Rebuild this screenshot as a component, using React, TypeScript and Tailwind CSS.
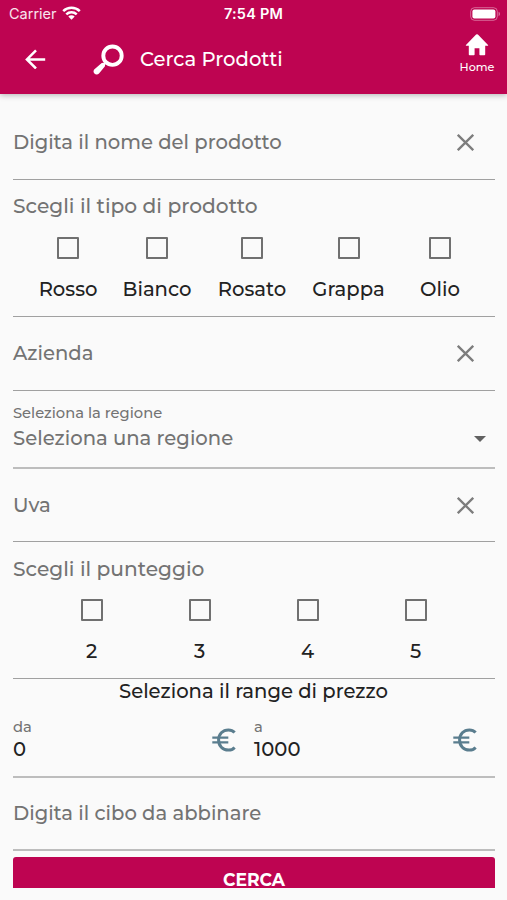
import type { ReactNode } from 'react'

const tipi = [
  { label: 'Rosso', width: 'w-[58px]' },
  { label: 'Bianco', width: 'w-[67px]' },
  { label: 'Rosato', width: 'w-[70px]' },
  { label: 'Grappa', width: 'w-[70px]' },
  { label: 'Olio', width: 'w-[60px]' },
]

const punteggi = ['2', '3', '4', '5']

function StatusBar() {
  return (
    <div className="grid h-7 grid-cols-3 items-center pl-[9px] pr-[6px] font-['Inter',sans-serif] text-[14.5px] leading-7">
      <div className="flex items-center gap-[5px]">
        <span className="text-white/90">Carrier</span>
        <svg className="-mt-[2px]" width="19" height="14" viewBox="0 0 19 14" fill="none" stroke="currentColor" strokeWidth="2.5">
          <path d="M1.2 5.2a11.8 11.8 0 0 1 16.6 0" />
          <path d="M4.3 8.4a7.4 7.4 0 0 1 10.4 0" />
          <path d="M9.5 13.8 6.3 10.6a4.6 4.6 0 0 1 6.4 0z" fill="currentColor" stroke="none" />
        </svg>
      </div>
      <span className="-ml-[3px] text-center font-semibold tracking-[0.2px]">7:54 PM</span>
      <svg className="-mt-px justify-self-end" width="31" height="14" viewBox="0 0 31 14">
        <rect x="0.7" y="0.7" width="26.6" height="12.6" rx="3.8" fill="none" stroke="#fff" strokeOpacity="0.4" />
        <rect x="2.4" y="2.4" width="23" height="9.2" rx="2" fill="#fff" />
        <path d="M28.6 4.8v4.4q1.4-.6 1.4-2.2t-1.4-2.2z" fill="#fff" fillOpacity="0.45" />
      </svg>
    </div>
  )
}

function Header() {
  return (
    <header className="h-[94px] shrink-0 bg-[#be0451] text-white shadow-[0_1px_6px_rgba(0,0,0,0.3)]">
      <StatusBar />
      <div className="flex h-[62px] items-center pl-[25px] pr-[10px]">
        <svg width="21" height="20" viewBox="0 0 21 20" fill="none" stroke="currentColor" strokeWidth="2.5">
          <path d="M20.2 10.4H2.2M11 1.3 1.900 10.400l9.100 9.100" />
        </svg>
        <svg className="ml-[47px]" width="31" height="31" viewBox="0 0 31 31" fill="none" stroke="currentColor">
          <circle cx="19.5" cy="11.7" r="9.2" strokeWidth="3.9" />
          <path d="m13 18.2-3 3" strokeWidth="2.6" />
          <path d="M8.4 19.2 1.2 25.6a3 3 0 0 0 .2 3.8 3.1 3.1 0 0 0 4.6.2l5.8-7.2q.6-1-.2-1.8l-1.4-1.4q-1-.8-1.8 0z" fill="currentColor" stroke="none" />
        </svg>
        <h1 className="ml-[16px] pt-[2px] text-[19.6px] font-medium">Cerca Prodotti</h1>
        <div className="ml-auto flex w-[40px] flex-col items-center pb-[11px]">
          <svg width="24" height="22" viewBox="0 0 24 22" fill="currentColor">
            <path d="M9.6 20.4v-6.2h4.8v6.2q0 .8.8.8h4.2q.8 0 .8-.8v-8.6h2.4q1-.1.2-1L12.9.6q-.9-.8-1.8 0L1.2 10.8q-.8.9.2 1h2.4v8.6q0 .8.8.8h4.2q.8 0 .8-.8z" />
          </svg>
          <span className="mt-[4px] text-[11.2px] font-medium leading-[14px]">Home</span>
        </div>
      </div>
    </header>
  )
}

function ClearIcon() {
  return (
    <svg className="mr-[21px]" width="17" height="17" viewBox="0 0 17 17" stroke="#7d7d7d" strokeWidth="2.3">
      <path d="m.8.8 15.4 15.4M16.2.8.8 16.2" />
    </svg>
  )
}

function EuroIcon() {
  return (
    <svg width="24" height="24" viewBox="0 0 24 24" fill="none" stroke="#5a7d8e" strokeWidth="3">
      <path d="M22.6 4.6C21 2.8 18.8 1.9 16.4 1.9 10.6 1.9 6.6 6.2 6.6 12s4 10.1 9.8 10.1c2.6 0 4.6-.9 6.2-2.7" />
      <path d="M.3 9.6h16M.3 14.4h16" strokeWidth="2.4" />
    </svg>
  )
}

function Checkbox() {
  return <span className="block size-[22px] rounded-[1px] border-2 border-[#707070]" />
}

function Field({ className, children }: { className: string; children: ReactNode }) {
  return (
    <div className={`flex items-center justify-between text-[#737373] ${className}`}>
      {children}
    </div>
  )
}

function Prezzo({ label, value }: { label: string; value: string }) {
  return (
    <div className="flex flex-1 justify-between pr-[18px]">
      <div>
        <div className="text-[14.7px] leading-[20px] text-[#737373]">{label}</div>
        <div className="leading-6 text-[#222]">{value}</div>
      </div>
      <div className="pt-[11px]">
        <EuroIcon />
      </div>
    </div>
  )
}

export default function App() {
  return (
    <div className="flex h-[900px] w-[507px] flex-col overflow-hidden bg-[#fafafa] font-['Montserrat','Inter',sans-serif]">
      <Header />
      <main className="pl-[13px] pr-[12px] text-[19.6px] font-medium leading-6">
        <Field className="h-[86px] border-b border-[#a0a0a0] pt-[11px]">
          <span>Digita il nome del prodotto</span>
          <ClearIcon />
        </Field>

        <div className="h-[137px] border-b border-[#a0a0a0] pt-[14px]">
          <p className="text-[20.2px] text-[#737373]">Scegli il tipo di prodotto</p>
          <div className="mt-[19px] flex gap-[26.5px] pl-[26px]">
            {tipi.map((tipo) => (
              <div key={tipo.label} className={`flex flex-col items-center ${tipo.width}`}>
                <Checkbox />
                <span className="mt-[18px] whitespace-nowrap text-[#222]">{tipo.label}</span>
              </div>
            ))}
          </div>
        </div>

        <Field className="h-[74px] border-b border-[#a0a0a0]">
          <span className="pb-[2px]">Azienda</span>
          <ClearIcon />
        </Field>

        <div className="flex h-[78px] items-start justify-between border-b-2 border-[#bdbdbd] pt-[12px] text-[#737373]">
          <div>
            <div className="text-[14.7px] leading-[20px]">Seleziona la regione</div>
            <div className="mt-[3px]">Seleziona una regione</div>
          </div>
          <span className="mr-[9px] mt-[33px] h-0 w-0 border-x-[6px] border-t-[6px] border-x-transparent border-t-[#616161]" />
        </div>

        <Field className="h-[73px] border-b border-[#a0a0a0]">
          <span>Uva</span>
          <ClearIcon />
        </Field>

        <div className="h-[137px] border-b border-[#a0a0a0] pt-[15px]">
          <p className="text-[20.2px] text-[#737373]">Scegli il punteggio</p>
          <div className="mt-[18px] flex justify-center pr-px">
            {punteggi.map((punteggio) => (
              <div key={punteggio} className="flex w-[108px] flex-col items-center">
                <Checkbox />
                <span className="mt-[18px] text-[#222]">{punteggio}</span>
              </div>
            ))}
          </div>
        </div>

        <div className="h-[99px] border-b-2 border-[#bdbdbd]">
          <p className="pr-px text-center text-[#222]">Seleziona il range di prezzo</p>
          <div className="mt-[14px] flex">
            <Prezzo label="da" value="0" />
            <Prezzo label="a" value="1000" />
          </div>
        </div>

        <Field className="h-[73px] border-b-2 border-[#bdbdbd]">
          <span className="pb-[2px]">Digita il cibo da abbinare</span>
        </Field>

        <button className="mt-[6px] block h-[31px] w-full rounded-t-[3px] bg-[#be0451] pt-[14px] text-[17.2px] font-bold leading-[17px] text-white">
          CERCA
        </button>
      </main>
    </div>
  )
}
